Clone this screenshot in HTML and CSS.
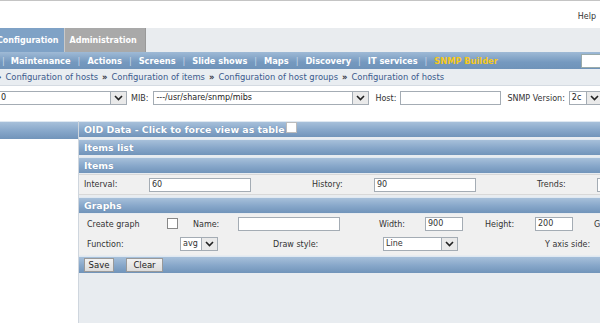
FILE: index.html
```html
<!DOCTYPE html>
<html>
<head>
<meta charset="utf-8">
<link rel="stylesheet" href="styles.css">
</head>
<body>
<div class="top"><span class="help">Help</span></div>
<div class="tabs">
  <span class="tab tab-active">Configuration</span><span class="tab tab-admin">Administration</span>
</div>
<div class="menu">
  <div class="menu-items">
    <span class="sep">|</span><span class="mi">Maintenance</span><span class="sep">|</span><span class="mi">Actions</span><span class="sep">|</span><span class="mi">Screens</span><span class="sep">|</span><span class="mi">Slide shows</span><span class="sep">|</span><span class="mi">Maps</span><span class="sep">|</span><span class="mi">Discovery</span><span class="sep">|</span><span class="mi">IT services</span><span class="sep">|</span><span class="mi mi-sel">SNMP Builder</span>
  </div>
  <span class="search"></span>
</div>
<div class="crumbs">
  <span class="rq">»</span><a>Configuration of hosts</a><span class="rq">»</span><a>Configuration of items</a><span class="rq">»</span><a>Configuration of host groups</a><span class="rq">»</span><a>Configuration of hosts</a>
</div>
<div class="filter">
  <span class="sel sel-host"><span class="sv">0</span><span class="arr"><svg width="9" height="6" viewBox="0 0 9 6"><path d="M1 1 L4.5 4.5 L8 1" fill="none" stroke="#222" stroke-width="1.6"/></svg></span></span>
  <span class="lbl lbl-mib">MIB:</span>
  <span class="sel sel-mib"><span class="sv">---/usr/share/snmp/mibs</span><span class="arr"><svg width="9" height="6" viewBox="0 0 9 6"><path d="M1 1 L4.5 4.5 L8 1" fill="none" stroke="#222" stroke-width="1.6"/></svg></span></span>
  <span class="lbl lbl-host">Host:</span>
  <span class="inp inp-host"></span>
  <span class="lbl lbl-ver">SNMP Version:</span>
  <span class="sel sel-ver"><span class="sv">2c</span><span class="arr"><svg width="9" height="6" viewBox="0 0 9 6"><path d="M1 1 L4.5 4.5 L8 1" fill="none" stroke="#222" stroke-width="1.6"/></svg></span></span>
</div>
<div class="main">
  <div class="side"><div class="hdr side-hdr"></div></div>
  <div class="content">
    <div class="hdr">OID Data - Click to force view as table<span class="cb cb-hdr"></span></div>
    <div class="hdr">Items list</div>
    <div class="hdr">Items</div>
    <div class="row row-items">
      <span>Interval:</span><span class="inp">60</span><span></span>
      <span>History:</span><span class="inp">90</span><span></span>
      <span>Trends:</span><span class="inp"></span>
    </div>
    <div class="hdr">Graphs</div>
    <div class="graphs">
      <div class="row row-g1">
        <span>Create graph</span><span class="cb"></span>
        <span>Name:</span><span class="inp"></span><span></span>
        <span>Width:</span><span class="inp">900</span><span></span>
        <span>Height:</span><span class="inp">200</span><span></span>
        <span>G</span>
      </div>
      <div class="row row-g2">
        <span>Function:</span>
        <span class="sel"><span class="sv">avg</span><span class="arr"><svg width="9" height="6" viewBox="0 0 9 6"><path d="M1 1 L4.5 4.5 L8 1" fill="none" stroke="#222" stroke-width="1.6"/></svg></span></span>
        <span></span>
        <span>Draw style:</span>
        <span class="sel"><span class="sv">Line</span><span class="arr"><svg width="9" height="6" viewBox="0 0 9 6"><path d="M1 1 L4.5 4.5 L8 1" fill="none" stroke="#222" stroke-width="1.6"/></svg></span></span>
        <span></span>
        <span>Y axis side:</span>
      </div>
    </div>
    <div class="hdr btnbar"><span class="btn btn-save">Save</span><span class="btn btn-clear">Clear</span></div>
  </div>
</div>
</body>
</html>
```

FILE: styles.css
```css
html, body {
  margin: 0;
  padding: 0;
  overflow: hidden;
  width: 600px;
  height: 323px;
  background: #fff;
  font-family: "DejaVu Sans", Verdana, sans-serif;
  font-size: 8px;
  color: #222;
}

.top {
  height: 27px;
  border-top: 1px solid #c4c4c4;
  display: flex;
  justify-content: flex-end;
  align-items: center;
  padding-right: 4px;
}
.help { color: #333; padding-top: 4px; }

.tabs {
  height: 24px;
  background: #e9ecef;
  display: flex;
  align-items: stretch;
}
.tab {
  display: flex;
  align-items: center;
  color: #fff;
  font-weight: bold;
  padding: 0 5px;
  white-space: nowrap;
  flex-shrink: 0;
}
.tab-active {
  background: #7fa2c6;
  margin-left: -8px;
}
.tab-admin {
  background: #a9a9a9;
  border-left: 1px solid #c9c9c9;
  border-right: 1px solid #999;
  padding: 0 5px 0 5px;
  width: 70px;
}

.menu {
  height: 17px;
  background: linear-gradient(#9fbad6, #7599bf 60%, #6f93b9);
  display: flex;
  align-items: center;
  justify-content: space-between;
}
.menu-items { display: flex; align-items: center; padding-left: 2px; white-space: nowrap; font-size: 8.25px; }
.mi { color: #fff; font-weight: bold; }
.mi-sel { color: #f7c81a; }
.sep { color: #c8d6e6; padding: 0 7px; }
.sep:first-child { padding-left: 0; padding-right: 6px; }
.search {
  width: 18px;
  height: 12px;
  background: #fff;
  border: 1px solid #9aa;
  border-right: 0;
}

.crumbs {
  height: 16px;
  background: #e9edf1;
  border-bottom: 1px solid #d5dbe2;
  display: flex;
  align-items: center;
  margin-left: -4px;
  white-space: nowrap;
  font-size: 8.4px;
}
.crumbs a { color: #3a5a8c; }
.rq { color: #334; font-weight: bold; padding: 0 4px; }
.rq:first-child { padding-left: 0; }

.filter {
  height: 20px;
  display: flex;
  align-items: center;
  margin-top: 2px;
  margin-bottom: 13px;
  white-space: nowrap;
}
.filter > * { flex-shrink: 0; }

.sel {
  display: inline-flex;
  align-items: stretch;
  height: 12px;
  background: #fff;
  border: 1px solid #a4acb4;
  box-sizing: content-box;
}
.sv { flex: 1; padding-left: 2px; line-height: 12px; overflow: hidden; white-space: nowrap; }
.arr {
  width: 15px;
  background: #eaeaea;
  border-left: 1px solid #a4acb4;
  display: flex;
  align-items: center;
  justify-content: center;
  flex-shrink: 0;
}
.inp {
  display: inline-block;
  height: 12px;
  line-height: 12px;
  background: #fff;
  border: 1px solid #a4acb4;
  padding-left: 2px;
  box-sizing: content-box;
}
.lbl { color: #333; }

.sel-host { width: 128px; margin-left: -3px; }
.sel-host .sv { padding-left: 3px; }
.lbl-mib { margin-left: 4px; margin-right: 5px; }
.sel-mib { width: 214px; }
.lbl-host { margin-left: 6px; margin-right: 4px; }
.inp-host { width: 97px; }
.lbl-ver { margin-left: 6px; margin-right: 4px; }
.sel-ver { width: 32px; }

.main {
  display: grid;
  grid-template-columns: 79px 1fr;
  height: 202px;
}
.side { background: #fff; border-right: 1px solid #cfd6de; }
.content {
  background: #e8ecf0;
  overflow: hidden;
  width: 600px;
}

.hdr {
  height: 16px;
  box-sizing: border-box;
  border-top: 1px solid #dfe8f1;
  margin-bottom: 2px;
  background: linear-gradient(#a7c0da, #86a6c9 55%, #7194ba);
  color: #fff;
  font-weight: bold;
  font-size: 9.4px;
  display: flex;
  align-items: center;
  padding-left: 5px;
  text-shadow: 0 0 1px #5f7fa5;
  white-space: nowrap;
}
.side-hdr { height: 18px; }

.cb {
  display: inline-block;
  width: 9px;
  height: 9px;
  background: #fff;
  border: 1px solid #888;
}
.cb-hdr { margin-left: 1px; margin-top: -4px; border-color: #bbb; }

.row {
  display: grid;
  align-items: center;
  height: 20px;
  color: #333;
  white-space: nowrap;
}
.row-items {
  background: #f0f0f0;
  border-top: 1px solid #d8d8d8;
  border-bottom: 1px solid #d8d8d8;
  margin-top: -1px;
  margin-bottom: 2px;
  padding-left: 5px;
  grid-template-columns: 65px 102px 61px 62px 102px 61px 60px 30px;
  height: 19px;
}
.graphs {
  background: #f0f0f0;
  margin-top: -1px;
  padding-bottom: 1px;
}
.row-g1 {
  padding-left: 8px;
  grid-template-columns: 80px 26px 45px 102px 39px 46px 38px 22px 50px 38px 21px auto;
}
.row-g2 {
  padding-left: 8px;
  grid-template-columns: 93px 38px 55px 110px 75px 87px auto;
}
.row-g1 .cb { margin-top: -2px; }

.btnbar { height: 17px; margin-top: 1px; padding-left: 5px; }
.btn {
  display: inline-flex;
  align-items: center;
  justify-content: center;
  height: 12px;
  background: linear-gradient(#f2f2f2, #dcdcdc);
  border: 1px solid #999;
  color: #222;
  font-weight: normal;
  font-size: 8.5px;
  text-shadow: none;
}
.btn-save { width: 28px; }
.btn-clear { width: 35px; margin-left: 12px; }
```
